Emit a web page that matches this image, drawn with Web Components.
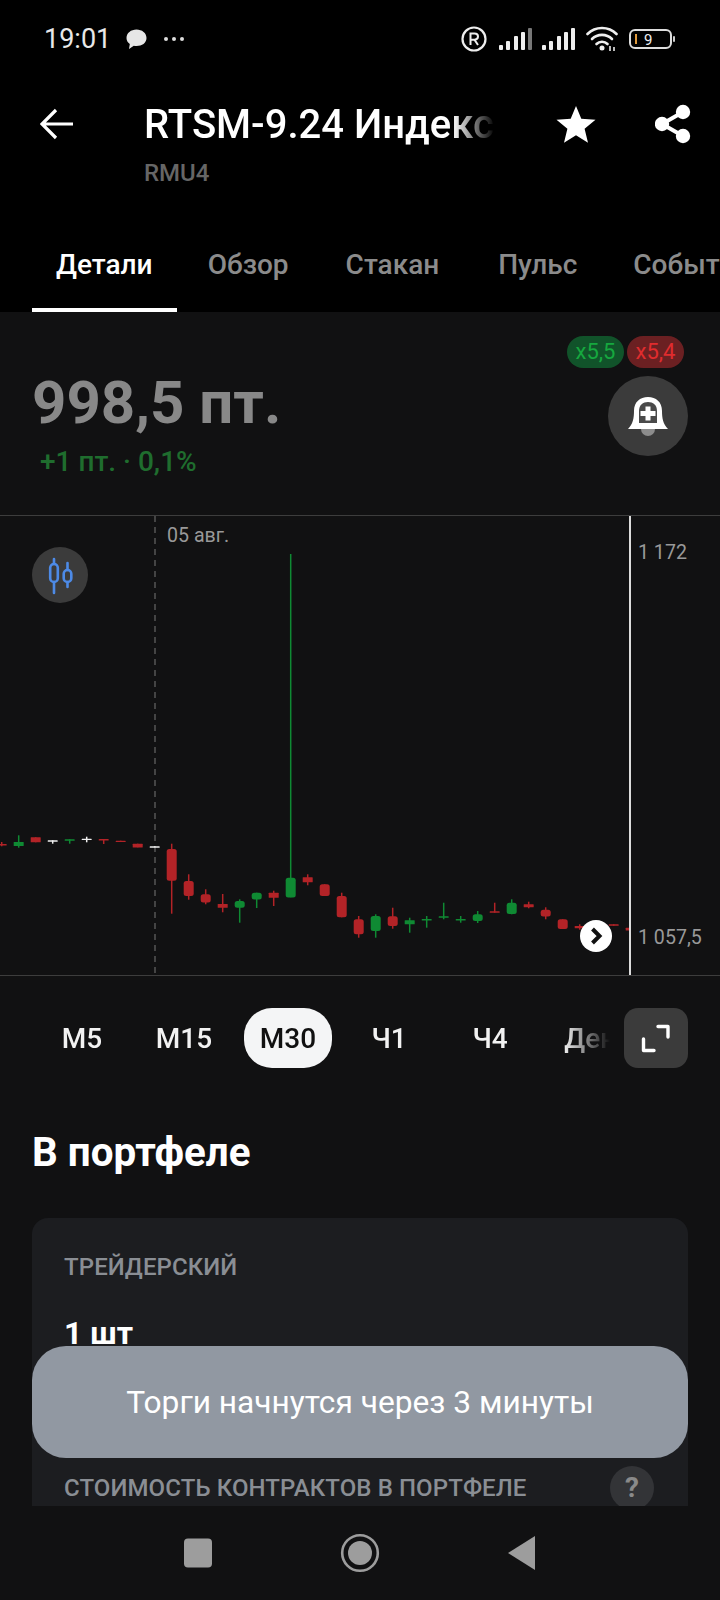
<!DOCTYPE html>
<html lang="ru">
<head>
<meta charset="utf-8">
<title>RTSM-9.24</title>
<style>
	html, body{ margin: 0; background: #111112; }
	body{ font-family: Roboto, "Noto Sans", sans-serif; color: #fff; }
</style>
</head>
<body>
<trade-app>
	<status-bar></status-bar>
	<app-header title-text="RTSM-9.24 Индекс" code="RMU4"></app-header>
	<tab-bar>
		<tab-item active>Детали</tab-item>
		<tab-item style="margin-left:-2px">Обзор</tab-item>
		<tab-item>Стакан</tab-item>
		<tab-item style="margin-left:2px">Пульс</tab-item>
		<tab-item style="margin-left:-1px">События</tab-item>
	</tab-bar>
	<quote-panel price="998,5 пт." change="+1 пт. · 0,1%" long="x5,5" short="x5,4"></quote-panel>
	<candle-chart></candle-chart>
	<frame-bar>
		<frame-item>М5</frame-item>
		<frame-item>М15</frame-item>
		<frame-item active style="margin:0 -1px 0 2px">М30</frame-item>
		<frame-item>Ч1</frame-item>
		<frame-item style="margin-left:-1px">Ч4</frame-item>
		<frame-item style="margin-left:6px">День</frame-item>
	</frame-bar>
	<portfolio-card></portfolio-card>
	<toast-message slot="overlay">Торги начнутся через 3 минуты</toast-message>
	<nav-bar slot="nav"></nav-bar>
</trade-app>
<script>
(function(){
	'use strict';

	class Base extends HTMLElement {
		constructor(html){
			super();
			this.attachShadow({mode:'open'}).innerHTML = html;
		}
	}

	customElements.define('trade-app', class extends Base {
		constructor(){
			super(`<style>
				:host{ display:block; position:relative; width:720px; height:1600px; overflow:hidden; background:#111112; }
				.main{ height:1506px; overflow:hidden; }
			</style>
			<div class="main"><slot></slot></div>
			<slot name="overlay"></slot>
			<slot name="nav"></slot>`);
		}
	});

	customElements.define('status-bar', class extends Base {
		constructor(){
			super(`<style>
				:host{ display:flex; align-items:center; height:78px; background:#000; color:#eee; box-sizing:border-box; padding:0 0 0 44px; }
				.time{ font-size:27px; width:82px; color:#e8e8e8; }
				svg{ display:block; flex:none; }
				.sp{ flex:1; }
			</style>
			<span class="time">19:01</span>
			<svg width="21" height="21" viewBox="0 0 21 21"><path d="M10.5 0.5C16 0.5 20.5 4 20.5 9C20.5 14 16 17 10.500 17C9.500 17 8.500 16.900 7.800 16.700L3 20L3.800 15C1.800 13.500 0.500 11.500 0.500 9C0.500 4 5 0.500 10.500 0.500Z" fill="#e6e6e6"/></svg>
			<svg width="22" height="6" viewBox="0 0 22 6" style="margin-left:16px"><circle cx="3" cy="3" r="2" fill="#ddd"/><circle cx="11" cy="3" r="2" fill="#ddd"/><circle cx="19" cy="3" r="2" fill="#ddd"/></svg>
			<span class="sp"></span>
			<svg width="26" height="26" viewBox="0 0 26 26"><circle cx="13" cy="13" r="11.500" fill="none" stroke="#eee" stroke-width="2.200"/><path d="M9.500 19V7.500H13.500C15.700 7.500 17 8.700 17 10.600C17 12.500 15.700 13.700 13.500 13.700H9.500M13.500 13.700L17 19" fill="none" stroke="#eee" stroke-width="2"/></svg>
			<svg width="34" height="22" viewBox="0 0 34 22" style="margin-left:12px"><rect x="0" y="17" width="4" height="5" rx="1" fill="#eee"/><rect x="7" y="13" width="4" height="9" rx="1" fill="#eee"/><rect x="15" y="8" width="4" height="14" rx="1" fill="#eee"/><rect x="22" y="4" width="4" height="18" rx="1" fill="#eee"/><rect x="29" y="0" width="4" height="22" rx="1" fill="#777"/></svg>
			<svg width="34" height="22" viewBox="0 0 34 22" style="margin-left:9px"><rect x="0" y="17" width="4" height="5" rx="1" fill="#eee"/><rect x="7" y="13" width="4" height="9" rx="1" fill="#eee"/><rect x="15" y="8" width="4" height="14" rx="1" fill="#eee"/><rect x="22" y="4" width="4" height="18" rx="1" fill="#eee"/><rect x="29" y="0" width="4" height="22" rx="1" fill="#eee"/></svg>
			<svg width="32" height="26" viewBox="0 0 32 26" style="margin-left:10px"><g fill="none" stroke="#eee" stroke-width="2.600" stroke-linecap="round"><path d="M1.500 8C9.500 0 22.500 0 30.500 8"/><path d="M6 13C11.500 7.500 20.500 7.500 26 13"/><path d="M10.500 18C13.500 15 18.500 15 21.500 18"/></g><circle cx="16" cy="22" r="2.500" fill="#eee"/><path d="M24 25V20M28 25V21" stroke="#bbb" stroke-width="2"/></svg>
			<svg width="47" height="20" viewBox="0 0 47 20" style="margin:0 44px 0 11px"><rect x="1" y="1" width="41" height="18" rx="5" fill="none" stroke="#ddd" stroke-width="2"/><rect x="6" y="5" width="2" height="10" fill="#e09a3c"/><text x="15" y="16" font-family="Roboto" font-size="15" fill="#eee">9</text><rect x="44" y="7" width="2" height="6" rx="1" fill="#ccc"/></svg>`);
		}
	});

	customElements.define('app-header', class extends Base {
		constructor(){
			super(`<style>
				:host{ display:flex; align-items:flex-start; height:130px; background:#000; box-sizing:border-box; padding:24px 0 0 40px; }
				svg{ display:block; flex:none; margin-top:2px; }
				.titles{ width:350px; margin-left:72px; }
				.title{ font-size:40px; line-height:46px; font-weight:500; margin-left:-1px; white-space:nowrap; overflow:hidden;
					-webkit-mask-image:linear-gradient(to right,#000 88%,transparent 100%); mask-image:linear-gradient(to right,#000 88%,transparent 100%); }
				.code{ font-size:24px; line-height:30px; font-weight:500; color:#666; margin:10px 0 0 -1px; }
			</style>
			<svg width="33" height="40" viewBox="0 0 33 40"><path d="M33 20H3M16 6L2 20L16 34" fill="none" stroke="#fff" stroke-width="3.200"/></svg>
			<div class="titles"><div class="title"></div><div class="code"></div></div>
			<svg width="40" height="40" viewBox="0 0 40 40" style="margin-left:61px"><path d="M20 2L25.300 14.800L39.500 15.800L28.600 24.800L32 38.800L20 31.300L8 38.800L11.400 24.800L0.500 15.800L14.700 14.800Z" fill="#fff"/></svg>
			<svg width="36" height="40" viewBox="0 0 36 40" style="margin-left:59px"><path d="M28 8L7 20L28 32" fill="none" stroke="#fff" stroke-width="4"/><circle cx="28" cy="8" r="7.200" fill="#fff"/><circle cx="7" cy="20" r="7.200" fill="#fff"/><circle cx="28" cy="32" r="7.200" fill="#fff"/></svg>`);
			this.shadowRoot.querySelector('.title').textContent = this.getAttribute('title-text');
			this.shadowRoot.querySelector('.code').textContent = this.getAttribute('code');
		}
	});

	customElements.define('tab-bar', class extends Base {
		constructor(){
			super(`<style>
				:host{ display:flex; height:104px; background:#000; overflow:hidden; box-sizing:border-box; padding-left:32px; gap:9px; }
			</style><slot></slot>`);
		}
	});

	customElements.define('tab-item', class extends Base {
		constructor(){
			super(`<style>
				:host{ display:block; flex:none; box-sizing:border-box; height:104px; padding:41px 24px 0; font-size:28px; line-height:32px; font-weight:500; color:#8b8b8b; white-space:nowrap; }
				:host([active]){ color:#fff; border-bottom:4px solid #fff; }
			</style><slot></slot>`);
		}
	});

	customElements.define('quote-panel', class extends Base {
		constructor(){
			super(`<style>
				:host{ display:flex; justify-content:space-between; height:203px; box-sizing:border-box; padding:0 32px; }
				.price{ padding-top:55px; font-size:60px; line-height:72px; font-weight:700; color:#888; }
				.change{ font-size:28px; line-height:32px; margin:7px 0 0 8px; color:#1f6d2e; font-weight:500; }
				.right{ display:flex; flex-direction:column; align-items:flex-end; padding-top:24px; }
				.chips{ display:flex; gap:3px; margin-right:4px; }
				.chip{ width:57px; height:32px; border-radius:16px; font-size:22px; line-height:32px; text-align:center; }
				.long{ background:#11532a; color:#16a83f; }
				.short{ background:#6b2022; color:#e02c2e; }
				.bell{ display:flex; align-items:center; justify-content:center; width:80px; height:80px; margin-top:8px; border-radius:50%; background:#3b3b3b; }
				svg{ display:block; }
			</style>
			<div class="left"><div class="price"></div><div class="change"></div></div>
			<div class="right">
				<div class="chips"><div class="chip long"></div><div class="chip short"></div></div>
				<div class="bell"><svg width="40" height="40" viewBox="0 0 40 40"><path d="M13 33A7 7 0 0 0 27 33Z" fill="#8c8c8c"/><path d="M0 33C5 28 6 22 6 15C6 6 12 1 20 1C28 1 34 6 34 15C34 22 35 28 40 33Z" fill="#fff"/><path d="M11 15C11 9 15 6 20 6C25 6 29 9 29 15L29 27H11Z" fill="#4a4a4a"/><path d="M17.500 10.500H22.500V15H27.500V20H22.500V24.500H17.500V20H12.500V15H17.500Z" fill="#fff"/></svg></div>
			</div>`);
			const $ = (s) => this.shadowRoot.querySelector(s);
			$('.price').textContent = this.getAttribute('price');
			$('.change').textContent = this.getAttribute('change');
			$('.long').textContent = this.getAttribute('long');
			$('.short').textContent = this.getAttribute('short');
		}
	});

	// g / r / w, wick top, body top, body bottom, wick bottom
	const CANDLES = [
		['r',93,99,103,106],['g',73,93,105,110],['r',79,79,94,94],['w',88,88,91,98],['g',85,85,89,98],
		['w',77,83,87,94],['r',84,84,87,99],['r',89,89,93,93],['r',98,98,109,109],['w',106,106,109,109],
		['r',98,114,209,308],['r',190,210,255,266],['r',235,250,275,280],['r',249,279,290,304],['g',265,270,290,335],
		['g',245,245,265,291],['r',239,245,260,285],['g',-771,200,259,259],['r',190,199,214,223],['r',220,220,255,255],
		['r',245,255,319,319],['r',315,325,370,380],['g',310,315,360,380],['r',290,316,345,353],['g',320,328,340,365],
		['g',315,324,328,350],['g',275,316,320,325],['g',315,324,328,335],['g',300,310,330,336],['r',275,301,305,305],
		['g',265,275,309,310],['r',272,280,289,292],['r',289,296,316,325],['r',325,325,354,354],['r',340,345,352,356],
		['r',345,345,349,349],['r',340,340,344,344],['r',350,350,358,358]
	];
	const COLORS = { r:'#b32327', g:'#0f8a33', w:'#f0f0f0' };

	customElements.define('candle-chart', class extends Base {
		constructor(){
			const y = (z) => (295 + z / 3).toFixed(1);
			const shapes = CANDLES.map((c, i) => {
				const x = 1.7 + 17 * i;
				const h = Math.max((c[3] - c[2]) / 3, 1.4);
				return `<line x1="${x}" x2="${x}" y1="${y(c[1])}" y2="${y(c[4])}" stroke="${COLORS[c[0]]}" stroke-width="1.500"/>`
					+ `<rect x="${x - 5}" y="${y(c[2])}" width="10" height="${h.toFixed(1)}" rx="${h > 5 ? 2.5 : 0.5}" fill="${COLORS[c[0]]}"/>`;
			}).join('');
			super(`<style>
				:host{ display:block; position:relative; height:461px; box-sizing:border-box; border-top:1px solid #3d3d3d; border-bottom:1px solid #3d3d3d; color:#999; font-size:19.600px; }
				svg{ display:block; }
				.lbl{ position:absolute; line-height:22px; white-space:nowrap; }
				.ind{ position:absolute; left:32px; top:31px; width:56px; height:56px; border-radius:50%; background:#3b3b3b; }
				.next{ position:absolute; left:580px; top:404px; width:32px; height:32px; border-radius:50%; background:#fff; }
			</style>
			<svg width="720" height="459" viewBox="0 0 720 459">
				<line x1="155" x2="155" y1="0" y2="459" stroke="#555" stroke-width="1.500" stroke-dasharray="6 5"/>
				<svg x="0" y="0" width="630" height="459" style="overflow:hidden">${shapes}</svg>
				<line x1="630" x2="630" y1="0" y2="459" stroke="#dcdcdc" stroke-width="2"/>
			</svg>
			<span class="lbl" style="left:167px;top:9px">05 авг.</span>
			<span class="lbl" style="left:638px;top:26px">1 172</span>
			<span class="lbl" style="left:638px;top:411px">1 057,5</span>
			<div class="ind"><svg width="56" height="56" viewBox="0 0 56 56" fill="none" stroke="#4d8ae6" stroke-width="2.600" stroke-linecap="round"><path d="M22 12V17M22 35V46M35.500 16V23M35.500 35V40"/><rect x="18.200" y="17" width="7.600" height="18" rx="3.800"/><rect x="31.700" y="23" width="7.600" height="12" rx="3.800"/></svg></div>
			<div class="next"><svg width="32" height="32" viewBox="0 0 32 32"><path d="M12.500 9L19.500 16L12.500 23" fill="none" stroke="#111" stroke-width="4"/></svg></div>`);
		}
	});

	customElements.define('frame-bar', class extends Base {
		constructor(){
			super(`<style>
				:host{ display:flex; align-items:flex-start; height:92px; box-sizing:border-box; padding:32px 32px 0; gap:14px; }
				.scroll{ display:flex; flex:1; min-width:0; gap:14px; padding-left:6px; overflow:hidden;
					-webkit-mask-image:linear-gradient(to right,#000 92%,transparent 100%); mask-image:linear-gradient(to right,#000 92%,transparent 100%); }
				.full{ flex:none; width:64px; height:60px; border-radius:14px; background:#3b3b3b; }
				svg{ display:block; }
			</style>
			<div class="scroll"><slot></slot></div>
			<div class="full"><svg width="64" height="60" viewBox="0 0 64 60"><path d="M34 18.500H44V29M19.500 31V42.500H30" fill="none" stroke="#fff" stroke-width="3.400" stroke-linecap="round" stroke-linejoin="round"/></svg></div>`);
		}
	});

	customElements.define('frame-item', class extends Base {
		constructor(){
			super(`<style>
				:host{ display:block; flex:none; width:88px; height:60px; border-radius:28px; font-size:28px; line-height:62px; font-weight:500; text-align:center; color:#f2f2f2; white-space:nowrap; }
				:host([active]){ background:#f4f5f6; color:#111; }
			</style><slot></slot>`);
		}
	});

	customElements.define('portfolio-card', class extends Base {
		constructor(){
			super(`<style>
				:host{ display:block; padding:0 32px; }
				h2{ margin:62px 0 42px; font-size:40.400px; line-height:46px; font-weight:700; }
				.card{ background:#1c1d20; border-radius:16px; padding:34px 32px 40px; }
				.cap{ font-size:24px; line-height:30px; font-weight:500; letter-spacing:.1px; color:#8a8e94; }
				.qty{ font-size:32px; line-height:36px; font-weight:700; margin:33px 0 115px; }
				.row{ display:flex; align-items:center; justify-content:space-between; height:44px; }
				.q{ width:44px; height:44px; margin-right:2px; border-radius:50%; background:#333437; color:#8a8a8a; font-size:28px; line-height:44px; font-weight:700; text-align:center; }
			</style>
			<h2>В портфеле</h2>
			<div class="card">
				<div class="cap">ТРЕЙДЕРСКИЙ</div>
				<div class="qty">1 шт</div>
				<div class="row"><span class="cap">СТОИМОСТЬ КОНТРАКТОВ В ПОРТФЕЛЕ</span><span class="q">?</span></div>
			</div>`);
		}
	});

	customElements.define('toast-message', class extends Base {
		constructor(){
			super(`<style>
				:host{ display:flex; align-items:center; justify-content:center; position:absolute; left:32px; right:32px; top:1346px; height:112px; border-radius:34px; background:#9198a2; color:#fff; font-size:31.700px; }
			</style><slot></slot>`);
		}
	});

	customElements.define('nav-bar', class extends Base {
		constructor(){
			super(`<style>
				:host{ display:flex; align-items:center; justify-content:center; gap:122px; height:94px; background:#111112; }
				svg{ display:block; }
			</style>
			<svg width="40" height="40" viewBox="0 0 40 40"><rect x="6" y="5.500" width="28" height="29" rx="4" fill="#9d9d9d"/></svg>
			<svg width="40" height="40" viewBox="0 0 40 40"><circle cx="20" cy="20" r="17.800" fill="none" stroke="#9d9d9d" stroke-width="2.600"/><circle cx="20" cy="20" r="12" fill="#9d9d9d"/></svg>
			<svg width="40" height="40" viewBox="0 0 40 40"><path d="M6 20L33 3V37Z" fill="#9d9d9d"/></svg>`);
		}
	});
})();
</script>
</body>
</html>
